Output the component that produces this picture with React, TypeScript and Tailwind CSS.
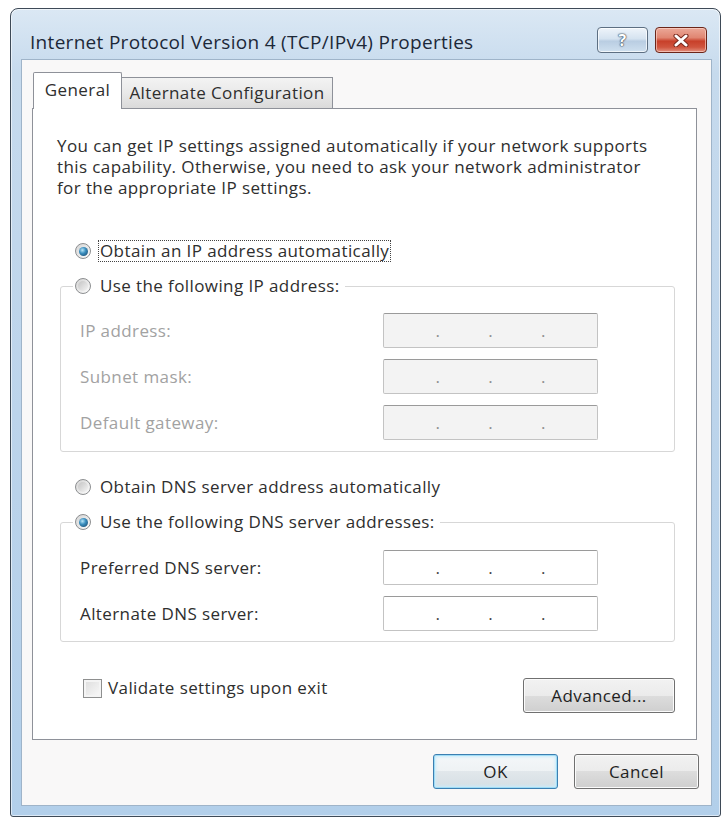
import React from "react";

const FONT = { fontFamily: '"Open Sans", "Noto Sans", Arial, sans-serif' };

function Radio({ checked }: { checked?: boolean }) {
  return (
    <span className="w-[16px] h-[16px] shrink-0 rounded-full border border-[#8c8e90] bg-[linear-gradient(135deg,#d4d4d4,#fdfdfd)] flex items-center justify-center">
      {checked ? (
        <span className="w-[9px] h-[9px] rounded-full bg-[radial-gradient(circle_at_38%_35%,#b9e6f8_0%,#3b8fbf_40%,#143f63_100%)]" />
      ) : (
        <span className="w-[10px] h-[10px] rounded-full bg-[linear-gradient(135deg,#c4c4c4,#f4f4f4)]" />
      )}
    </span>
  );
}

function IpBox({ disabled }: { disabled?: boolean }) {
  return (
    <div
      className={
        "w-[215px] h-[35px] rounded-[2px] border border-[#c3c3c3] border-t-[#9a9a9a] flex items-center px-[4px] tracking-normal " +
        (disabled ? "bg-[#f3f3f3] text-[#8f8f8f]" : "bg-white text-[#444444]")
      }
    >
      <span className="flex-1" />
      <span className="w-[6px] text-center">.</span>
      <span className="flex-1" />
      <span className="w-[6px] text-center">.</span>
      <span className="flex-1" />
      <span className="w-[6px] text-center">.</span>
      <span className="flex-1" />
    </div>
  );
}

function Row({ label, disabled }: { label: string; disabled?: boolean }) {
  return (
    <div className="flex items-center h-[35px]">
      <span className={"w-[303px] " + (disabled ? "text-[#a2a2a2]" : "text-[#2e2e2e]")}>{label}</span>
      <IpBox disabled={disabled} />
    </div>
  );
}

function Button({ children, def, className }: { children: React.ReactNode; def?: boolean; className?: string }) {
  return (
    <div
      className={
        "h-[35px] rounded-[3px] border flex items-center justify-center text-[#1f1f1f] " +
        (def
          ? "border-[#3c7fb1] bg-[linear-gradient(#f4f7f9_0%,#eef2f4_50%,#e1e7eb_50%,#d6dfe4_100%)] shadow-[inset_0_0_0_1px_#9fdcf6,inset_0_0_3px_2px_#c9ecfb] "
          : "border-[#707070] bg-[linear-gradient(#f2f2f2_0%,#ebebeb_50%,#dddddd_50%,#cfcfcf_100%)] shadow-[inset_0_0_0_1px_#fbfbfb] ") +
        (className ?? "")
      }
    >
      {children}
    </div>
  );
}

export default function App() {
  return (
    <div className="w-[726px] h-[820px] bg-white pl-[10px] pt-[8px] text-[17px] tracking-[0.4px] text-[#2e2e2e]" style={FONT}>
      <div className="w-[711px] h-[809px] rounded-t-[8px] rounded-b-[3px] border border-[#3e4a57] bg-[linear-gradient(180deg,#dbe8f4_0%,#c6daed_8%,#bcd4eb_50%,#b2cfea_100%)] shadow-[inset_0_0_0_1px_rgba(255,255,255,0.55)] flex flex-col">
        {/* Title bar */}
        <div className="h-[50px] flex items-start pl-[19px] pr-[13px]">
          <span className="mt-[21px] text-[19px] tracking-[0.3px] leading-[24px] text-[#1c2838] whitespace-nowrap">
            Internet Protocol Version 4 (TCP/IPv4) Properties
          </span>
          <div className="ml-auto mt-[18px] flex gap-[7px]">
            <div className="w-[51px] h-[26px] rounded-[4px] border border-[#5d6f82] bg-[linear-gradient(180deg,#eef4fa_0%,#d5e3f0_45%,#b9cde2_55%,#cfe0ef_100%)] shadow-[inset_0_0_0_1px_rgba(255,255,255,0.7)] flex items-center justify-center">
              <span className="text-[16px] font-bold leading-none text-white [text-shadow:0_0_1px_#3a4a5c,0_0_1px_#3a4a5c,0_0_2px_#3a4a5c]">?</span>
            </div>
            <div className="w-[52px] h-[26px] rounded-[4px] border border-[#6b2519] bg-[linear-gradient(180deg,#eba898_0%,#e08672_40%,#c8402a_55%,#d0553f_80%,#e39180_100%)] shadow-[inset_0_0_0_1px_rgba(255,220,210,0.6)] flex items-center justify-center">
              <svg width="18" height="13" viewBox="0 0 18 13">
                <path d="M4 2 L14 11 M14 2 L4 11" stroke="#7a2a1e" strokeWidth="5" strokeLinecap="round" />
                <path d="M4 2 L14 11 M14 2 L4 11" stroke="#ffffff" strokeWidth="3" strokeLinecap="round" />
              </svg>
            </div>
          </div>
        </div>

        {/* Client area */}
        <div className="ml-[10px] mr-[8px] h-[747px] border border-[#9fb4c9] bg-[#f9f8f8] flex flex-col">
          {/* Tabs */}
          <div className="ml-[11px] mt-[12px] h-[36px] flex items-end relative z-10">
            <div className="w-[89px] h-[37px] -mb-[1px] bg-white border border-b-0 border-[#8e9199] rounded-t-[2px] flex items-center justify-center pb-[3px]">
              General
            </div>
            <div className="w-[211px] h-[31px] bg-[linear-gradient(180deg,#f3f3f3_0%,#e9e9e9_50%,#dadada_100%)] border border-b-0 border-l-0 border-[#8e9199] flex items-center justify-center">
              Alternate Configuration
            </div>
          </div>

          {/* Panel */}
          <div className="ml-[10px] w-[665px] h-[632px] bg-white border border-[#8e9199] flex flex-col">
            <p className="ml-[24px] mt-[26px] leading-[21px] whitespace-nowrap">
              You can get IP settings assigned automatically if your network supports
              <br />
              this capability. Otherwise, you need to ask your network administrator
              <br />
              for the appropriate IP settings.
            </p>

            <div className="ml-[42px] mt-[41px] h-[24px] flex items-center">
              <Radio checked />
              <span className="ml-[7px] px-[1px] border border-dotted border-[#444] leading-[20px]">
                Obtain an IP address automatically
              </span>
            </div>

            <fieldset className="ml-[27px] mt-[11px] w-[615px] border border-[#d7d7d7] rounded-[3px] px-0 pt-[15px] pb-[11px]">
              <legend className="ml-[12px] px-[2px] h-[24px] flex items-center">
                <Radio />
                <span className="ml-[9px] pr-[3px]">Use the following IP address:</span>
              </legend>
              <div className="pl-[19px] flex flex-col gap-[11px]">
                <Row label="IP address:" disabled />
                <Row label="Subnet mask:" disabled />
                <Row label="Default gateway:" disabled />
              </div>
            </fieldset>

            <div className="ml-[42px] mt-[23px] h-[24px] flex items-center">
              <Radio />
              <span className="ml-[9px]">Obtain DNS server address automatically</span>
            </div>

            <fieldset className="ml-[27px] mt-[11px] w-[615px] border border-[#d7d7d7] rounded-[3px] px-0 pt-[16px] pb-[10px]">
              <legend className="ml-[12px] px-[2px] h-[24px] flex items-center">
                <Radio checked />
                <span className="ml-[9px] pr-[3px]">Use the following DNS server addresses:</span>
              </legend>
              <div className="pl-[19px] flex flex-col gap-[11px]">
                <Row label="Preferred DNS server:" />
                <Row label="Alternate DNS server:" />
              </div>
            </fieldset>

            <div className="ml-[27px] mt-[36px] w-[615px] flex items-start">
              <div className="ml-[23px] flex items-center h-[20px]">
                <span className="w-[19px] h-[19px] border border-[#8e8f8f] bg-[linear-gradient(135deg,#dcdcdc,#fafafa)] shadow-[inset_0_0_0_2px_#f4f4f4]" />
                <span className="ml-[6px]">Validate settings upon exit</span>
              </div>
              <Button className="ml-auto w-[152px]">Advanced...</Button>
            </div>
          </div>

          {/* Bottom buttons */}
          <div className="mt-[14px] mr-[12px] flex justify-end gap-[16px]">
            <Button def className="w-[125px]">OK</Button>
            <Button className="w-[125px]">Cancel</Button>
          </div>
        </div>
      </div>
    </div>
  );
}
